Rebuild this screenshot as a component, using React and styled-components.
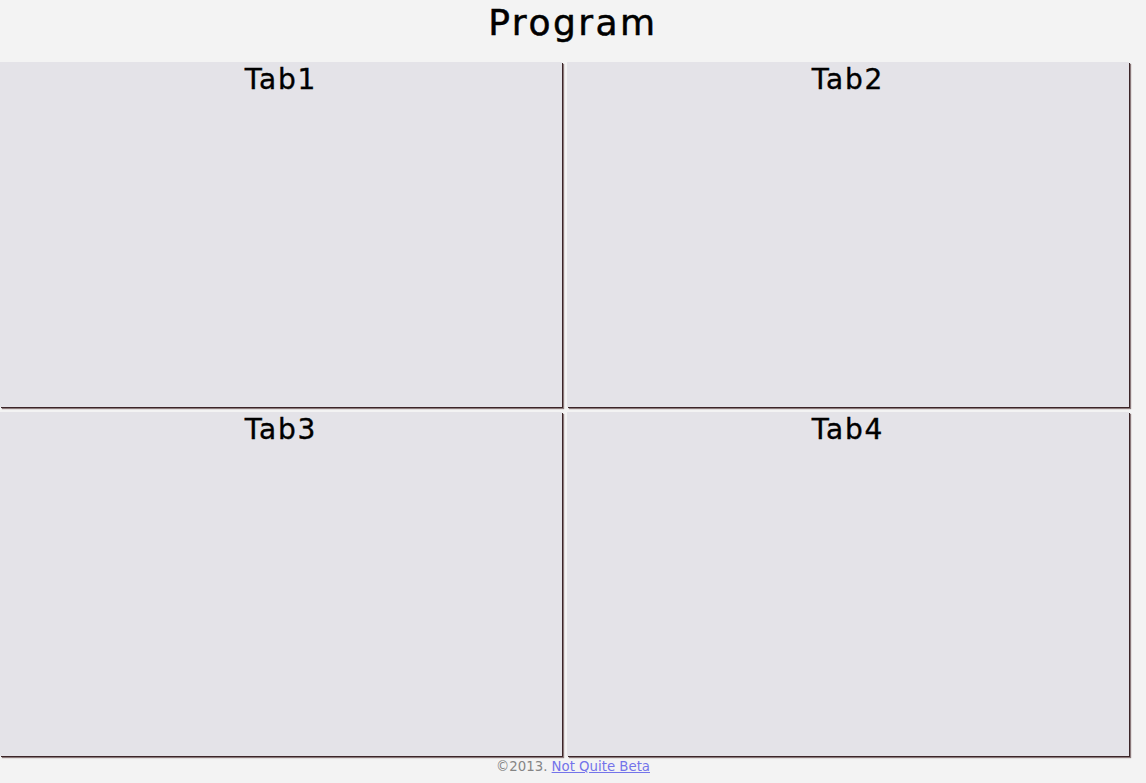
import React from 'react';
import styled, { createGlobalStyle } from 'styled-components';

const GlobalStyle = createGlobalStyle`
  html, body {
    margin: 0;
    padding: 0;
    background: #f3f3f3;
    font-family: "DejaVu Sans", "Liberation Sans", sans-serif;
  }
`;

const Page = styled.div`
  width: 1146px;
  height: 783px;
  display: flex;
  flex-direction: column;
  background: #f3f3f3;
`;

const Header = styled.h1`
  margin: 0;
  height: 62px;
  padding-top: 2px;
  box-sizing: border-box;
  text-align: center;
  font-size: 36px;
  font-weight: normal;
  letter-spacing: 2.5px;
  -webkit-text-stroke: 0.5px #000;
  color: #000;
`;

const Grid = styled.div`
  display: grid;
  grid-template-columns: 562px 562px;
  grid-template-rows: 345px 344px;
  column-gap: 5px;
  row-gap: 5px;
`;

const Tab = styled.section`
  background: #e4e3e8;
  box-shadow: 1px 1px 0 #3b2528, 2px 2px 1px rgba(70, 40, 42, 0.6);
  text-align: center;
`;

const TabTitle = styled.h2`
  margin: 0;
  padding-top: 1px;
  font-size: 28px;
  font-weight: normal;
  letter-spacing: 1.8px;
  -webkit-text-stroke: 0.4px #000;
  color: #000;
`;

const Footer = styled.footer`
  margin-top: 3px;
  text-align: center;
  font-size: 13.3px;
  color: #858585;

  a {
    color: #7474ea;
  }
`;

const tabs = ['Tab1', 'Tab2', 'Tab3', 'Tab4'];

const App = () => (
  <Page>
    <GlobalStyle />
    <Header>Program</Header>
    <Grid>
      {tabs.map((t) => (
        <Tab key={t}>
          <TabTitle>{t}</TabTitle>
        </Tab>
      ))}
    </Grid>
    <Footer>
      ©2013. <a href="#">Not Quite Beta</a>
    </Footer>
  </Page>
);

export default App;
